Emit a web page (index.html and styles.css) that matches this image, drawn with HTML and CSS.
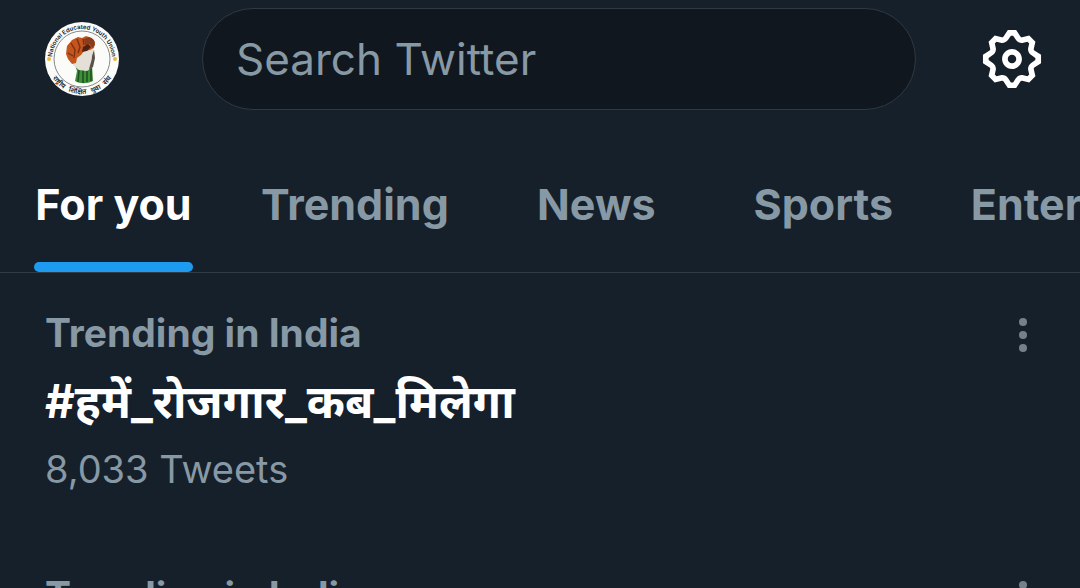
FILE: index.html
```html
<!DOCTYPE html>
<html lang="en">
<head>
    <meta charset="UTF-8">
    <meta name="viewport" content="width=device-width, initial-scale=1.0">
    <title>Explore / Twitter</title>
    <link rel="stylesheet" href="styles.css">
</head>
<body>
    <header class="top-bar">
        <a href="#" class="avatar" aria-label="Profile">
            <svg viewBox="0 0 76 76" width="76" height="76">
                <defs>
                    <path id="ring-top" d="M8 38a30 30 0 0 1 60 0"/>
                    <path id="ring-bottom" d="M3 38a35 35 0 0 0 70 0"/>
                </defs>
                <circle cx="38" cy="38" r="37" fill="#fbfbf9"/>
                <circle cx="38" cy="38" r="28" fill="none" stroke="#555" stroke-width="0.7"/>
                <text class="ring-text"><textPath href="#ring-top" startOffset="50%" text-anchor="middle">National Educated Youth Union</textPath></text>
                <text class="ring-text ring-hindi"><textPath href="#ring-bottom" startOffset="50%" text-anchor="middle">राष्ट्रीय &#160; शिक्षित &#160; युवा &#160; संघ</textPath></text>
                <circle cx="5" cy="38" r="2" fill="#e8b93c"/>
                <circle cx="71" cy="38" r="2" fill="#e8b93c"/>
                <!-- raised fist -->
                <path d="M31 44l2 6-2 10c5 3 12 3 18 0l-1-16z" fill="#3f8f3a"/>
                <path d="M35 49l-1 12M39 49v13M43 48v13M47 46v14" stroke="#1c4f1d" stroke-width="1.5" fill="none"/>
                <path d="M29 39l8-7 8-5 5 2 1 8-2 9-6 4-8-1-6-5z" fill="#e4e0d8"/>
                <path d="M50 29l1 8-2 9-4 3c1-6 3-9 3-14z" fill="#5b5049"/>
                <path d="M22 33l1-8 5-6 6-3 4 1 4-2 6 2 3 4-1 6-4 2-6 1-3 4-4 3-1 5-4 1-4-5z" fill="#c4551f"/>
                <path d="M27 22l4 7-1 8M33 18l3 8-2 6M39 18l1 6M24 32l5 3" stroke="#7d300f" stroke-width="1.4" fill="none"/>
                <path d="M40 18l5-2 5 3 1 5-3 3-2-4-5 1z" fill="#8a3d1c"/>
                <path d="M39 26l5-3 3 3-4 4-5 1z" fill="#4d2113"/>
            </svg>
        </a>
        <input type="search" class="search-box" placeholder="Search Twitter" aria-label="Search Twitter">
        <button type="button" class="icon-btn" aria-label="Settings">
            <svg viewBox="0 0 24 24" width="68" height="68" fill="#fff">
                <path d="M10.54 1.75h2.92l1.57 2.36c.11.17.32.25.53.21l2.53-.59 2.17 2.17-.58 2.54c-.05.2.04.41.21.53l2.36 1.57v2.92l-2.36 1.57c-.17.12-.26.33-.21.53l.58 2.54-2.17 2.17-2.53-.59c-.21-.04-.42.04-.53.21l-1.57 2.36h-2.92l-1.58-2.36c-.11-.17-.32-.25-.52-.21l-2.54.59-2.17-2.17.58-2.54c.05-.2-.03-.41-.21-.53l-2.35-1.57v-2.92L4.1 8.97c.18-.12.26-.33.21-.53L3.73 5.9 5.9 3.73l2.54.59c.2.04.41-.04.52-.21l1.58-2.36zm1.07 2l-.98 1.47C10.05 6.08 9 6.5 7.99 6.27l-1.46-.34-.6.6.33 1.46c.24 1.01-.18 2.07-1.05 2.64l-1.46.98v.78l1.46.98c.87.57 1.29 1.63 1.05 2.64l-.33 1.46.6.6 1.46-.34c1.01-.23 2.06.19 2.64 1.05l.98 1.47h.78l.97-1.47c.58-.86 1.63-1.28 2.65-1.05l1.45.34.61-.6-.34-1.46c-.23-1.01.18-2.07 1.05-2.64l1.47-.98v-.78l-1.47-.98c-.87-.57-1.28-1.63-1.05-2.64l.34-1.46-.61-.6-1.45.34c-1.02.23-2.07-.19-2.65-1.05l-.97-1.47h-.78zM12 10.5c-.83 0-1.5.67-1.5 1.5s.67 1.5 1.5 1.5c.82 0 1.5-.67 1.5-1.5s-.68-1.5-1.5-1.5zM8.5 12c0-1.93 1.56-3.5 3.5-3.5 1.93 0 3.5 1.57 3.5 3.5s-1.57 3.5-3.5 3.5c-1.94 0-3.5-1.57-3.5-3.5z"/>
            </svg>
        </button>
    </header>

    <nav class="tabs">
        <a href="#" class="tab active">For you</a>
        <a href="#" class="tab">Trending</a>
        <a href="#" class="tab">News</a>
        <a href="#" class="tab">Sports</a>
        <a href="#" class="tab">Entertainment</a>
    </nav>

    <main class="trends">
        <article class="trend">
            <div class="trend-info">
                <p class="trend-place">Trending in India</p>
                <h2 class="trend-name">#हमें_रोजगार_कब_मिलेगा</h2>
                <p class="trend-count">8,033 Tweets</p>
            </div>
            <button type="button" class="more-btn" aria-label="More">
                <svg viewBox="0 0 10 36" width="10" height="36" fill="#74818d">
                    <circle cx="5" cy="5" r="4"/>
                    <circle cx="5" cy="18" r="4"/>
                    <circle cx="5" cy="31" r="4"/>
                </svg>
            </button>
        </article>
        <article class="trend">
            <div class="trend-info">
                <p class="trend-place">Trending in India</p>
            </div>
            <button type="button" class="more-btn" aria-label="More">
                <svg viewBox="0 0 10 36" width="10" height="36" fill="#74818d">
                    <circle cx="5" cy="5" r="4"/>
                    <circle cx="5" cy="18" r="4"/>
                    <circle cx="5" cy="31" r="4"/>
                </svg>
            </button>
        </article>
    </main>
</body>
</html>
```
FILE: styles.css
```css
* {
    box-sizing: border-box;
}

body {
    margin: 0;
    height: 100vh;
    overflow: hidden;
    background-color: #16202a;
    color: #8899a6;
    font-family: Inter, "Noto Sans", "Noto Sans Devanagari", sans-serif;
}

button {
    padding: 0;
    border: none;
    background: none;
    cursor: pointer;
}

svg {
    display: block;
}

/* Top bar */
.top-bar {
    display: flex;
    align-items: center;
    padding: 8px 34px 0 44px;
}

.avatar {
    margin-right: 82px;
}

.ring-text {
    font-size: 6px;
    font-weight: 600;
    fill: #222;
}

.ring-hindi {
    font-size: 7px;
}

.search-box {
    flex: 1;
    min-width: 0;
    height: 102px;
    margin-right: 62px;
    padding: 0 33px;
    border: 1px solid #303841;
    border-radius: 51px;
    background-color: #10171e;
    color: #fff;
    font-family: inherit;
    font-size: 44px;
}

.search-box::placeholder {
    color: #8899a6;
    opacity: 1;
}

/* Tabs */
.tabs {
    display: flex;
    height: 163px;
    padding-top: 26px;
    border-bottom: 1px solid #303b45;
}

.tab {
    position: relative;
    display: flex;
    flex: none;
    justify-content: center;
    align-items: center;
    min-width: 227px;
    padding: 0 34px;
    color: #8899a6;
    font-size: 43px;
    font-weight: 700;
    text-decoration: none;
}

.tab.active {
    color: #fff;
}

.tab.active::after {
    content: "";
    position: absolute;
    left: 34px;
    right: 34px;
    bottom: 0;
    height: 10px;
    border-radius: 5px;
    background-color: #1d9bf0;
}

/* Trends */
.trend {
    display: flex;
    justify-content: space-between;
    align-items: flex-start;
    padding: 36px 52px 43px 45px;
}

.trend-place,
.trend-name,
.trend-count {
    margin: 0;
}

.trend-place {
    font-size: 39px;
    font-weight: 700;
    line-height: 48px;
}

.trend-name {
    color: #fff;
    font-size: 46px;
    font-weight: 700;
    line-height: 88px;
}

.trend-count {
    font-size: 38px;
    line-height: 48px;
}

.more-btn {
    margin-top: 8px;
}
```
